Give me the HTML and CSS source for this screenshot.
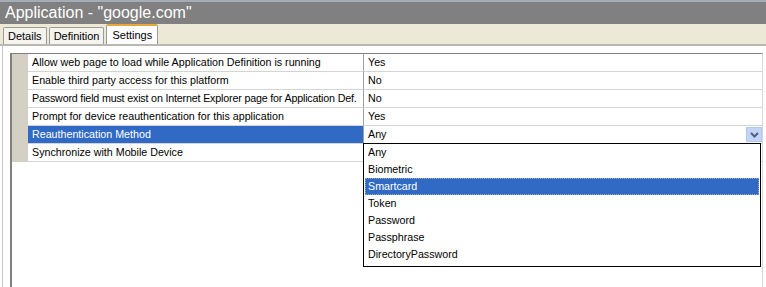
FILE: index.html
```html
<!DOCTYPE html>
<html lang="en">
<head>
    <meta charset="UTF-8">
    <title>Application - "google.com"</title>
    <link rel="stylesheet" href="styles.css">
</head>
<body>
    <div class="window">
        <div class="titlebar">Application - "google.com"</div>

        <div class="tabs">
            <div class="tab">Details</div>
            <div class="tab">Definition</div>
            <div class="tab active">Settings</div>
        </div>

        <div class="panel">
            <div class="grid">
                <div class="row">
                    <div class="strip"></div>
                    <div class="name">Allow web page to load while Application Definition is running</div>
                    <div class="value">Yes</div>
                </div>
                <div class="row">
                    <div class="strip"></div>
                    <div class="name">Enable third party access for this platform</div>
                    <div class="value">No</div>
                </div>
                <div class="row">
                    <div class="strip"></div>
                    <div class="name tight">Password field must exist on Internet Explorer page for Application Def.</div>
                    <div class="value">No</div>
                </div>
                <div class="row">
                    <div class="strip"></div>
                    <div class="name">Prompt for device reauthentication for this application</div>
                    <div class="value">Yes</div>
                </div>
                <div class="row selected">
                    <div class="strip"></div>
                    <div class="name">Reauthentication Method</div>
                    <div class="value">
                        <span>Any</span>
                        <span class="drop-btn">
                            <svg width="9" height="6" viewBox="0 0 9 6"><path d="M1 1 L4.5 4.5 L8 1" fill="none" stroke="#4d6185" stroke-width="2"/></svg>
                        </span>
                        <ul class="dropdown">
                            <li>Any</li>
                            <li>Biometric</li>
                            <li class="hl">Smartcard</li>
                            <li>Token</li>
                            <li>Password</li>
                            <li>Passphrase</li>
                            <li>DirectoryPassword</li>
                        </ul>
                    </div>
                </div>
                <div class="row">
                    <div class="strip"></div>
                    <div class="name">Synchronize with Mobile Device</div>
                    <div class="value"></div>
                </div>
            </div>
        </div>
    </div>
</body>
</html>
```

FILE: styles.css
```css
body { margin: 0; background: #fff; font-family: 'Liberation Sans', Arial, sans-serif; font-size: 10.7px; color: #000; }
.window { width: 766px; height: 287px; overflow: hidden; display: flex; flex-direction: column; }
.titlebar { height: 22px; border-top: 2px solid #a4acb8; background: #808080; color: #fff; font-size: 16px; line-height: 22px; padding-left: 5px; }
.tabs { height: 20px; background: #ecead6; border-bottom: 2px solid #b8b8b0; display: flex; align-items: flex-end; padding-left: 3px; gap: 2px; }
.tab { height: 16px; line-height: 16px; padding: 0 4px; border: 1px solid #9c9c94; border-bottom: none; background: #f4f3ee; border-radius: 2px 2px 0 0; font-size: 11px; }
.tab.active { height: 18px; line-height: 18px; background: #fcfcfe; border-top: 2px solid #e8a838; padding: 0 5px; }
.panel { flex: 1; margin-left: 2px; border-left: 1px solid #c8c8c8; padding: 7px 0 0 7px; display: flex; }
.grid { width: 750px; border-left: 2px solid #808080; border-top: 1px solid #808080; border-right: 1px solid #d8d8d8; }
.row { display: flex; height: 18px; }
.strip { width: 16px; background: #d4d0c4; flex: none; }
.name { width: 331px; padding-left: 4px; line-height: 17px; border-bottom: 1px solid #d4d4d4; border-right: 1px solid #a0a0a0; white-space: nowrap; overflow: hidden; flex: none; }
.name.tight { letter-spacing: -0.17px; }
.value { flex: 1; padding-left: 4px; line-height: 17px; border-bottom: 1px solid #d4d4d4; position: relative; display: flex; justify-content: space-between; }
.row.selected .name { background: #316ac5; color: #fff; }
.drop-btn { width: 16px; height: 15px; margin: 1px 0 0; background: #c4d4f4; border: 1px solid #b4c8ee; box-sizing: border-box; display: flex; align-items: center; justify-content: center; }
.dropdown { position: absolute; left: -1px; top: 17px; width: 396px; margin: 0; padding: 0 0 3px; list-style: none; border: 1px solid #000; background: #fff; z-index: 2; }
.dropdown li { height: 17px; line-height: 17px; padding-left: 4px; }
.dropdown li.hl { background: #316ac5; color: #fff; outline: 1px dotted #9ab; outline-offset: -1px; margin: 0 1px; padding-left: 3px; }
```
